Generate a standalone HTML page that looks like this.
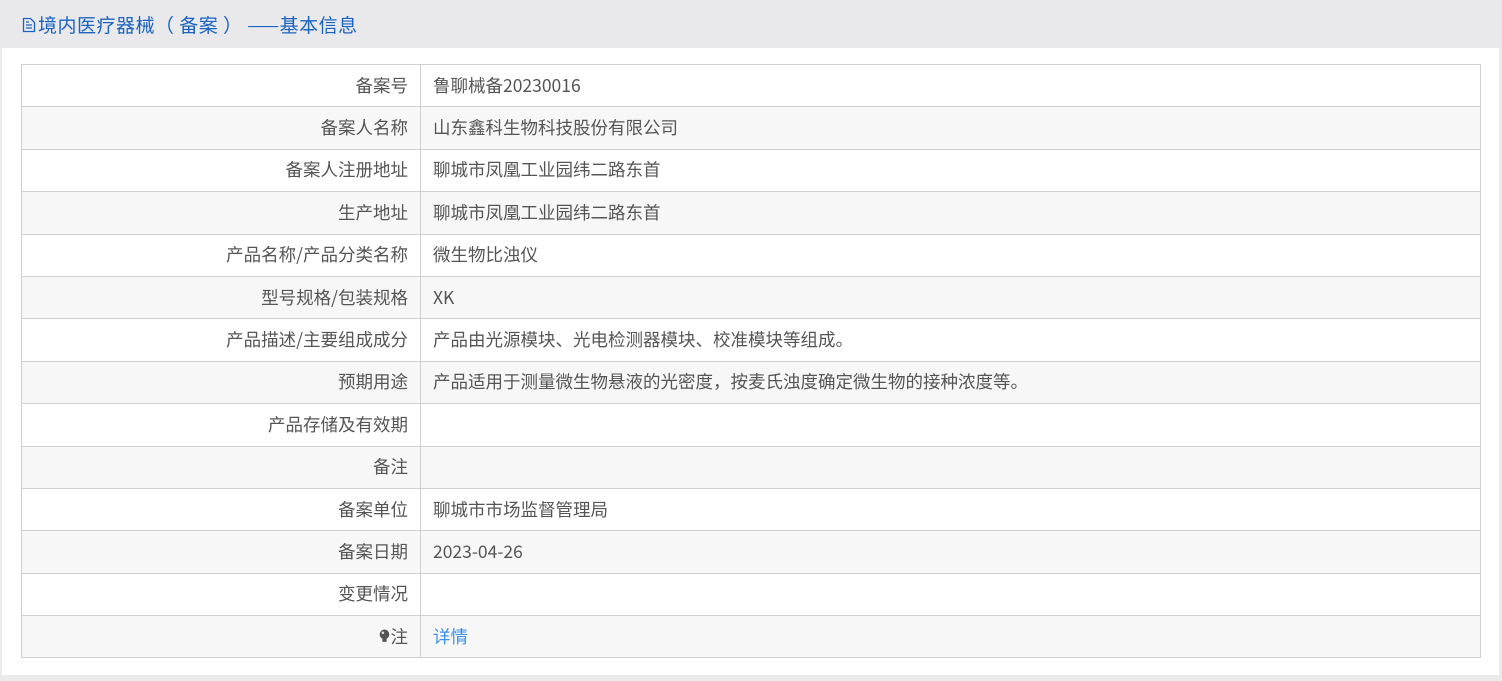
<!DOCTYPE html>
<html><head><meta charset="utf-8"><style>
body{margin:0;background:#ebebeb;font-family:"Noto Sans CJK SC","Liberation Sans",sans-serif;width:1502px;height:681px;overflow:hidden}
.hd{height:48px;background:#e9e9eb;color:#1a63c1;font-size:19px;line-height:50px;padding-left:22px;box-sizing:border-box;position:relative;letter-spacing:0.5px}
.panel{position:absolute;left:2px;top:48px;width:1497px;height:627px;background:#fff}
table{position:absolute;left:19px;top:16px;width:1460px;border-collapse:collapse;font-size:17.5px;color:#555;table-layout:fixed}
td{border:1px solid #d0d0d0;height:41.4px;padding:0;line-height:20px}
td.l{text-align:right;padding-right:12px;box-sizing:border-box}
td.v{padding-left:12px}
tr:nth-child(even) td{background:#f7f7f7}
a{color:#3b8fe8;text-decoration:none}
</style></head><body>
<div class="hd"><svg width="14" height="16" viewBox="0 0 14 16" style="vertical-align:-1px;margin-right:2px"><path d="M1.5 1.5h7l4 4v9h-11z" fill="none" stroke="#1a63c1" stroke-width="1.3"/><path d="M4 8h6M4 11h6M4 5h3" stroke="#1a63c1" stroke-width="1.2"/></svg>境内医疗器械（ 备案 ） ——基本信息</div>
<div class="panel"><table>
<colgroup><col style="width:399px"><col></colgroup>
<tr><td class="l">备案号</td><td class="v">鲁聊械备20230016</td></tr>
<tr><td class="l">备案人名称</td><td class="v">山东鑫科生物科技股份有限公司</td></tr>
<tr><td class="l">备案人注册地址</td><td class="v">聊城市凤凰工业园纬二路东首</td></tr>
<tr><td class="l">生产地址</td><td class="v">聊城市凤凰工业园纬二路东首</td></tr>
<tr><td class="l">产品名称/产品分类名称</td><td class="v">微生物比浊仪</td></tr>
<tr><td class="l">型号规格/包装规格</td><td class="v">XK</td></tr>
<tr><td class="l">产品描述/主要组成成分</td><td class="v">产品由光源模块、光电检测器模块、校准模块等组成。</td></tr>
<tr><td class="l">预期用途</td><td class="v">产品适用于测量微生物悬液的光密度，按麦氏浊度确定微生物的接种浓度等。</td></tr>
<tr><td class="l">产品存储及有效期</td><td class="v"></td></tr>
<tr><td class="l">备注</td><td class="v"></td></tr>
<tr><td class="l">备案单位</td><td class="v">聊城市市场监督管理局</td></tr>
<tr><td class="l">备案日期</td><td class="v">2023-04-26</td></tr>
<tr><td class="l">变更情况</td><td class="v"></td></tr>
<tr><td class="l"><svg width="13" height="15" viewBox="0 0 12 14" style="vertical-align:-1px"><circle cx="6" cy="5" r="4.5" fill="#555"/><rect x="4" y="9" width="4" height="3" fill="#555"/><circle cx="4.5" cy="3.5" r="1.2" fill="#ddd"/></svg>注</td><td class="v"><a>详情</a></td></tr>
</table></div>
</body></html>
